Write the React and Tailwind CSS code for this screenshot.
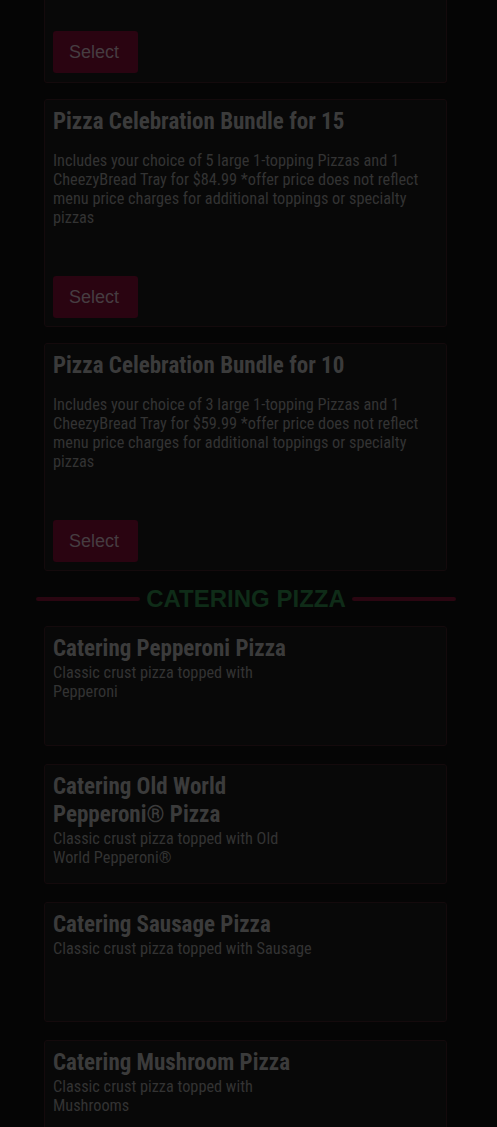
const bundles = [
  {
    id: 15,
    title: 'Pizza Celebration Bundle for 15',
    desc: 'Includes your choice of 5 large 1-topping Pizzas and 1 CheezyBread Tray for $84.99 *offer price does not reflect menu price charges for additional toppings or specialty pizzas',
  },
  {
    id: 10,
    title: 'Pizza Celebration Bundle for 10',
    desc: 'Includes your choice of 3 large 1-topping Pizzas and 1 CheezyBread Tray for $59.99 *offer price does not reflect menu price charges for additional toppings or specialty pizzas',
  },
];

const catering = [
  { title: 'Catering Pepperoni Pizza', desc: 'Classic crust pizza topped with Pepperoni' },
  { title: 'Catering Old World Pepperoni® Pizza', desc: 'Classic crust pizza topped with Old World Pepperoni®' },
  { title: 'Catering Sausage Pizza', desc: 'Classic crust pizza topped with Sausage' },
  { title: 'Catering Mushroom Pizza', desc: 'Classic crust pizza topped with Mushrooms' },
];

const SelectButton = () => (
  <button className="w-[85px] h-[42px] rounded-[3px] bg-[#2a0411] text-[#463d41] text-[18px] font-['Liberation_Sans',Arial,sans-serif] [font-stretch:normal] text-left pl-4">
    Select
  </button>
);

export default function App() {
  return (
    <div className="min-h-[1127px] bg-[#050505] font-['Roboto',sans-serif] font-stretch-condensed overflow-hidden">
      <div className="pl-[44px] w-[447px] flex flex-col gap-[16px]">
        {/* tail of the previous card */}
        <div className="h-[83px] border-x border-b border-[#140a0c] bg-[#080808] rounded-b-[3px] px-2 flex flex-col justify-end pb-[9px]">
          <SelectButton />
        </div>

        {bundles.map((b) => (
          <div key={b.id} className="border border-[#140a0c] bg-[#080808] rounded-[3px] p-2">
            <h3 className="text-[23px] leading-[28px] font-bold text-[#3b3b3b]">{b.title}</h3>
            <p className="mt-[15px] mb-[49px] text-[16.3px] leading-[19px] text-[#333333] pr-3">{b.desc}</p>
            <SelectButton />
          </div>
        ))}
      </div>

      {/* section heading */}
      <div className="mx-[36px] w-[420px] h-[55px] flex items-center gap-[6px]">
        <div className="flex-1 h-[4px] bg-[#2a0611] rounded-full" />
        <h2 className="text-[24px] font-bold text-[#0f2c18] font-['Liberation_Sans',Arial,sans-serif] [font-stretch:normal]">
          CATERING PIZZA
        </h2>
        <div className="flex-1 h-[4px] bg-[#2a0611] rounded-full" />
      </div>

      <div className="pl-[44px] w-[447px] flex flex-col gap-[18px]">
        {catering.map((c) => (
          <div key={c.title} className="h-[120px] border border-[#140a0c] bg-[#080808] rounded-[3px] p-2">
            <div className="w-[262px]">
              <h3 className="text-[23px] leading-[28px] font-bold text-[#3b3b3b]">{c.title}</h3>
              <p className="text-[16.3px] leading-[19px] text-[#333333]">{c.desc}</p>
            </div>
          </div>
        ))}
      </div>
    </div>
  );
}
